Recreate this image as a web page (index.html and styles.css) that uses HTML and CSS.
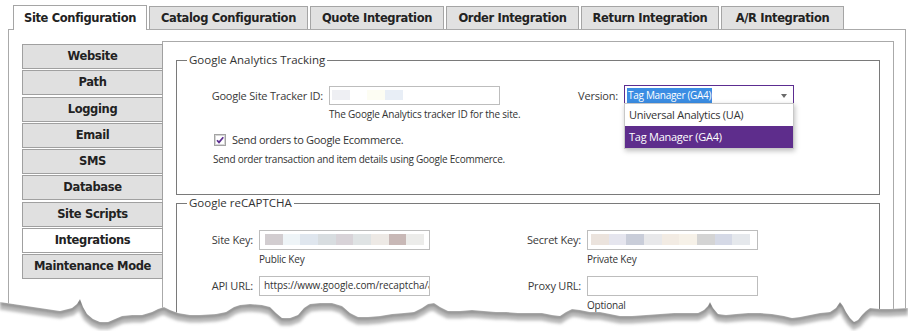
FILE: index.html
```html
<!DOCTYPE html>
<html lang="en">
<head>
    <meta charset="UTF-8">
    <title>Site Configuration - Integrations</title>
    <link rel="stylesheet" href="styles.css">
</head>
<body>
    <div class="window">
        <ul class="tabs">
            <li class="tab active">Site Configuration</li>
            <li class="tab">Catalog Configuration</li>
            <li class="tab">Quote Integration</li>
            <li class="tab">Order Integration</li>
            <li class="tab">Return Integration</li>
            <li class="tab">A/R Integration</li>
        </ul>

        <div class="panel">
            <ul class="side-tabs">
                <li class="side-tab">Website</li>
                <li class="side-tab">Path</li>
                <li class="side-tab">Logging</li>
                <li class="side-tab">Email</li>
                <li class="side-tab">SMS</li>
                <li class="side-tab">Database</li>
                <li class="side-tab">Site Scripts</li>
                <li class="side-tab active">Integrations</li>
                <li class="side-tab">Maintenance Mode</li>
            </ul>

            <div class="content">
                <fieldset class="group ga">
                    <legend>Google Analytics Tracking</legend>
                    <div class="ga-row">
                        <label class="field-label tracker-label">Google Site Tracker ID:</label>
                        <div class="field tracker-field">
                            <div class="input blur-tracker"></div>
                            <div class="hint">The Google Analytics tracker ID for the site.</div>
                        </div>
                        <label class="field-label version-label">Version:</label>
                        <div class="select-wrap">
                            <div class="select">
                                <span class="selected-text">Tag Manager (GA4)</span>
                                <span class="arrow"></span>
                            </div>
                            <ul class="dropdown">
                                <li class="option">Universal Analytics (UA)</li>
                                <li class="option selected">Tag Manager (GA4)</li>
                            </ul>
                        </div>
                    </div>
                    <label class="check-row">
                        <svg class="checkbox" width="12" height="12" viewBox="0 0 12 12">
                            <rect x="0.5" y="0.5" width="11" height="11" fill="#fff" stroke="#a3a3a3"/>
                            <rect x="1.5" y="1.5" width="9" height="9" fill="none" stroke="#d6d6d6"/>
                            <path d="M3 6.2 L5 8.4 L9.3 3.2" fill="none" stroke="#5c2d91" stroke-width="1.7"/>
                        </svg>
                        <span>Send orders to Google Ecommerce.</span>
                    </label>
                    <div class="desc">Send order transaction and item details using Google Ecommerce.</div>
                </fieldset>

                <fieldset class="group captcha">
                    <legend>Google reCAPTCHA</legend>
                    <div class="captcha-grid">
                        <label class="field-label">Site Key:</label>
                        <div class="field">
                            <div class="input blur-site"></div>
                            <div class="hint">Public Key</div>
                        </div>
                        <label class="field-label">Secret Key:</label>
                        <div class="field">
                            <div class="input blur-secret"></div>
                            <div class="hint">Private Key</div>
                        </div>

                        <label class="field-label">API URL:</label>
                        <div class="field">
                            <div class="input text-input">https://www.google.com/recaptcha/api.js</div>
                        </div>
                        <label class="field-label">Proxy URL:</label>
                        <div class="field">
                            <div class="input"></div>
                            <div class="hint">Optional</div>
                        </div>
                    </div>
                </fieldset>
            </div>
        </div>

        <svg class="torn" width="908" height="43" viewBox="0 288 908 43">
            <defs>
                <clipPath id="below">
                    <path d="M0,302 L20,305 L40,308 L60,311 L72,308 L77,304 L80,299 L83,307 L87,314 L93,319 L100,322 L108,322 L115,319 L122,316 L132,315 L142,315 L152,312 L158,309 L164,307 L170,310 L178,313 L190,315 L200,315 L216,314 L226,312 L234,307 L240,305 L250,304 L262,305 L270,307 L276,313 L282,318 L290,318 L298,315 L304,308 L310,304 L320,303 L332,303 L342,306 L350,313 L358,317 L368,317 L380,316 L392,314 L404,313 L414,312 L422,308 L428,304 L434,303 L440,307 L448,311 L460,311 L472,310 L484,311 L496,312 L506,312 L518,313 L530,313 L542,313 L552,315 L560,316 L566,312 L572,309 L580,310 L590,312 L600,312 L610,314 L620,316 L632,316 L646,315 L660,314 L674,313 L686,313 L698,313 L704,310 L708,306 L710,302 L713,308 L718,314 L726,315 L736,314 L748,313 L760,313 L772,314 L784,316 L792,318 L800,317 L810,315 L820,313 L830,312 L836,308 L840,302 L843,306 L846,312 L850,318 L854,322 L858,320 L862,315 L866,311 L870,308 L880,309 L890,309 L908,308 L908,331 L0,331 Z"/>
                </clipPath>
                <filter id="soft" x="-5%" y="-50%" width="110%" height="200%">
                    <feGaussianBlur stdDeviation="1.6"/>
                </filter>
            </defs>
            <g clip-path="url(#below)">
                <rect x="0" y="288" width="908" height="43" fill="#fff"/>
                <g filter="url(#soft)">
                    <polyline transform="translate(0 4)" fill="none" stroke="#b9b9b9" stroke-width="7"
                        points="0,302 20,305 40,308 60,311 72,308 77,304 80,299 83,307 87,314 93,319 100,322 108,322 115,319 122,316 132,315 142,315 152,312 158,309 164,307 170,310 178,313 190,315 200,315 216,314 226,312 234,307 240,305 250,304 262,305 270,307 276,313 282,318 290,318 298,315 304,308 310,304 320,303 332,303 342,306 350,313 358,317 368,317 380,316 392,314 404,313 414,312 422,308 428,304 434,303 440,307 448,311 460,311 472,310 484,311 496,312 506,312 518,313 530,313 542,313 552,315 560,316 566,312 572,309 580,310 590,312 600,312 610,314 620,316 632,316 646,315 660,314 674,313 686,313 698,313 704,310 708,306 710,302 713,308 718,314 726,315 736,314 748,313 760,313 772,314 784,316 792,318 800,317 810,315 820,313 830,312 836,308 840,302 843,306 846,312 850,318 854,322 858,320 862,315 866,311 870,308 880,309 890,309 908,308"/>
                    <polyline transform="translate(0 1)" fill="none" stroke="#6e6e6e" stroke-width="2.5"
                        points="0,302 20,305 40,308 60,311 72,308 77,304 80,299 83,307 87,314 93,319 100,322 108,322 115,319 122,316 132,315 142,315 152,312 158,309 164,307 170,310 178,313 190,315 200,315 216,314 226,312 234,307 240,305 250,304 262,305 270,307 276,313 282,318 290,318 298,315 304,308 310,304 320,303 332,303 342,306 350,313 358,317 368,317 380,316 392,314 404,313 414,312 422,308 428,304 434,303 440,307 448,311 460,311 472,310 484,311 496,312 506,312 518,313 530,313 542,313 552,315 560,316 566,312 572,309 580,310 590,312 600,312 610,314 620,316 632,316 646,315 660,314 674,313 686,313 698,313 704,310 708,306 710,302 713,308 718,314 726,315 736,314 748,313 760,313 772,314 784,316 792,318 800,317 810,315 820,313 830,312 836,308 840,302 843,306 846,312 850,318 854,322 858,320 862,315 866,311 870,308 880,309 890,309 908,308"/>
                </g>
            </g>
        </svg>
    </div>
</body>
</html>
```

FILE: styles.css
```css
html,
body {
    margin: 0;
    padding: 0;
    background: #fff;
}

body {
    width: 908px;
    height: 331px;
    overflow: hidden;
    font-family: "Open Sans", "Segoe UI", sans-serif;
    color: #333;
}

ul {
    list-style: none;
    margin: 0;
    padding: 0;
}

.window {
    position: relative;
    height: 331px;
    box-sizing: border-box;
    padding: 5px 0 0 8px;
}

/* top tab strip */
.tabs {
    display: flex;
    align-items: flex-end;
    gap: 2px;
    margin-left: 5px;
}

.tab {
    box-sizing: border-box;
    height: 23px;
    border: 1px solid #a5a5a5;
    border-bottom: none;
    background: #e1e1e1;
    color: #222;
    font: bold 11.5px "DejaVu Sans", sans-serif;
    letter-spacing: -0.35px;
    line-height: 22px;
    text-align: center;
}

.tab:nth-child(1) { width: 134px; }
.tab:nth-child(2) { width: 159px; }
.tab:nth-child(3) { width: 134px; }
.tab:nth-child(4) { width: 133px; }
.tab:nth-child(5) { width: 138px; }
.tab:nth-child(6) { width: 123px; }

.tab.active {
    position: relative;
    z-index: 1;
    height: 25px;
    margin-bottom: -1px;
    background: #fff;
    line-height: 24px;
}

.panel {
    display: flex;
    align-items: flex-start;
    box-sizing: border-box;
    width: 898px;
    height: 320px;
    border: 1px solid #aaa;
    padding: 11px 11px 0 13px;
}

/* vertical tabs */
.side-tabs {
    position: relative;
    z-index: 1;
    flex: none;
    width: 141px;
    margin: 3px -1px 0 0;
}

.side-tab {
    box-sizing: border-box;
    height: 25px;
    margin-bottom: 1.25px;
    border: 1px solid #a0a0a0;
    background: #e0e0e0;
    color: #222;
    font: bold 11.5px "DejaVu Sans", sans-serif;
    letter-spacing: -0.35px;
    line-height: 23px;
    text-align: center;
}

.side-tab.active {
    background: #fff;
}

.content {
    flex: 1;
    box-sizing: border-box;
    height: 300px;
    border: 1px solid #aaa;
    padding: 10px 13px 0;
}

/* field groups */
.group {
    min-width: 0;
    margin: 0;
    padding: 18px 0 27px;
    border: 1px solid #7a7a7a;
}

.group legend {
    margin-left: 10px;
    padding: 0 2px;
    font-size: 11.5px;
    line-height: 16px;
    color: #333;
}

.field-label {
    box-sizing: border-box;
    padding-right: 6px;
    font-size: 11px;
    letter-spacing: -0.2px;
    line-height: 19px;
    text-align: right;
    white-space: nowrap;
    color: #3a3a3a;
}

.input {
    box-sizing: border-box;
    width: 171px;
    height: 19px;
    border: 1px solid #bdbdbd;
    background-color: #fff;
    background-repeat: no-repeat;
}

.hint {
    margin-top: 1px;
    font-size: 10px;
    letter-spacing: -0.2px;
    line-height: 16px;
    white-space: nowrap;
}

.ga-row {
    display: flex;
    align-items: flex-start;
}

.tracker-label { width: 152px; }
.tracker-field { width: 230px; }
.version-label { width: 65px; }

.blur-tracker {
    background-image: linear-gradient(to right, #eeeff3 0 18px, #fff 18px 35px, #fdfdf3 35px 53px, #e8eef6 53px 71px);
    background-position: 2px 3px;
    background-size: 71px 10px;
}

.blur-site {
    background-image: linear-gradient(to right, #d2cdd0 0 18px, #eef4f7 18px 35px, #dfe6ee 35px 53px, #d8dde0 53px 71px, #d8d3d8 71px 88px, #dfe3e4 88px 106px, #ede9e5 106px 124px, #c8b8b6 124px 141px, #ececea 141px 159px);
    background-position: 5px 3px;
    background-size: 159px 11px;
}

.blur-secret {
    background-image: linear-gradient(to right, #ebe3dd 0 18px, #e5e5ee 18px 35px, #c9cdd9 35px 53px, #e8e8ea 53px 71px, #f2ebe3 71px 88px, #f6f1e8 88px 106px, #d4d4d4 106px 124px, #d5d9e6 124px 141px, #e5e8ec 141px 159px);
    background-position: 3px 3px;
    background-size: 159px 11px;
}

.text-input {
    overflow: hidden;
    padding-left: 4px;
    font-size: 10px;
    letter-spacing: -0.1px;
    line-height: 17px;
    white-space: nowrap;
}

/* version select with its open list */
.select-wrap {
    position: relative;
    width: 170px;
    margin-top: -1px;
}

.select {
    display: flex;
    align-items: center;
    box-sizing: border-box;
    height: 20px;
    padding-left: 2px;
    border: 1px solid #5c2d91;
    background: #fff;
}

.selected-text {
    padding: 0 1px;
    background: #3b8de3;
    color: #fff;
    font-size: 10px;
    letter-spacing: -0.3px;
    line-height: 15px;
}

.arrow {
    margin: 1px 6px 0 auto;
    border-left: 3.5px solid transparent;
    border-right: 3.5px solid transparent;
    border-top: 4px solid #6a6a6a;
}

.dropdown {
    position: absolute;
    top: 18px;
    left: 0;
    z-index: 2;
    box-sizing: border-box;
    width: 170px;
    border: 1px solid #c8c8c8;
    background: #fff;
    box-shadow: 1px 2px 5px rgba(0, 0, 0, 0.25);
}

.option {
    height: 22px;
    padding-left: 4px;
    font-size: 11px;
    letter-spacing: -0.25px;
    line-height: 22px;
    color: #333;
}

.option.selected {
    background: #5e2d8c;
    color: #fff;
}

.check-row {
    display: flex;
    align-items: center;
    gap: 6px;
    margin: 9px 0 0 37px;
    font-size: 11px;
    letter-spacing: -0.3px;
    line-height: 18px;
}

.desc {
    margin: 2px 0 0 36px;
    font-size: 10px;
    letter-spacing: -0.25px;
    line-height: 16px;
}

.captcha {
    padding-top: 19px;
    padding-bottom: 60px;
}

.captcha-grid {
    display: grid;
    grid-template-columns: 82px 171px 157px 170px;
    align-items: start;
    row-gap: 9px;
}

.captcha .input {
    height: 20px;
}

.torn {
    position: absolute;
    left: 0;
    top: 288px;
    z-index: 5;
}
```
